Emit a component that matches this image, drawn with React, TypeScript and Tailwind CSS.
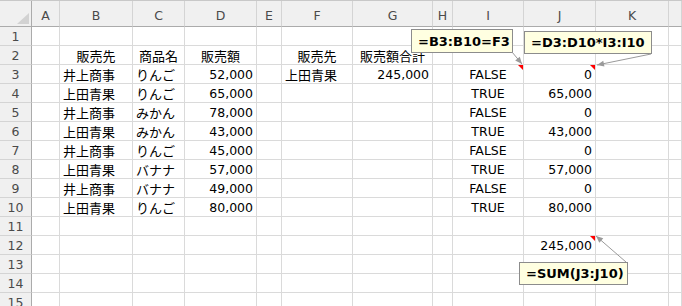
import React from "react";

type Align = "l" | "c" | "r";
type Cell = { t: string; a: Align; jp?: boolean };

const COLS = ["A", "B", "C", "D", "E", "F", "G", "H", "I", "J", "K", ""];
const ROW_COUNT = 15;

const jp = (t: string, a: Align = "l"): Cell => ({ t, a, jp: true });
const num = (t: string, a: Align = "r"): Cell => ({ t, a });

const DATA: [string, string, string, string, string][] = [
  ["井上商事", "りんご", "52,000", "FALSE", "0"],
  ["上田青果", "りんご", "65,000", "TRUE", "65,000"],
  ["井上商事", "みかん", "78,000", "FALSE", "0"],
  ["上田青果", "みかん", "43,000", "TRUE", "43,000"],
  ["井上商事", "りんご", "45,000", "FALSE", "0"],
  ["上田青果", "バナナ", "57,000", "TRUE", "57,000"],
  ["井上商事", "バナナ", "49,000", "FALSE", "0"],
  ["上田青果", "りんご", "80,000", "TRUE", "80,000"],
];

const sheet: Record<number, Record<string, Cell>> = {
  2: {
    B: jp("販売先", "c"),
    C: jp("商品名", "c"),
    D: jp("販売額", "c"),
    F: jp("販売先", "c"),
    G: jp("販売額合計", "c"),
  },
  12: { J: num("245,000") },
};

DATA.forEach(([client, item, amount, flag, value], i) => {
  const r = i + 3;
  sheet[r] = {
    B: jp(client),
    C: jp(item),
    D: num(amount),
    I: num(flag, "c"),
    J: num(value),
  };
});
sheet[3].F = jp("上田青果");
sheet[3].G = num("245,000");

const alignClass: Record<Align, string> = {
  l: "justify-start pl-[3px]",
  c: "justify-center",
  r: "justify-end pr-[3px]",
};

function GridCell({ cell }: { cell?: Cell }) {
  return (
    <div
      className={`flex h-[19px] items-center overflow-visible whitespace-nowrap border-r border-b border-[#dadada] bg-white text-black ${
        cell ? alignClass[cell.a] : ""
      }`}
    >
      {cell && (
        <span
          className={
            cell.jp
              ? "pt-[2px] text-[13px] leading-none"
              : "pt-[2px] text-[12.5px] leading-none"
          }
        >
          {cell.t}
        </span>
      )}
    </div>
  );
}

function arrowHead(x1: number, y1: number, x2: number, y2: number) {
  const dx = x2 - x1;
  const dy = y2 - y1;
  const len = Math.hypot(dx, dy);
  const ux = dx / len;
  const uy = dy / len;
  const L = 7;
  const W = 3;
  const bx = x2 - ux * L;
  const by = y2 - uy * L;
  return `${x2},${y2} ${bx - uy * W},${by + ux * W} ${bx + uy * W},${by - ux * W}`;
}

const ARROWS: [number, number, number, number][] = [
  [512, 52, 522, 64],
  [651, 54, 597, 65],
  [626, 262, 596, 236],
];

const MARKERS: [number, number][] = [
  [523, 65],
  [595, 65],
  [595, 236],
];

function Overlay() {
  return (
    <svg
      className="pointer-events-none absolute left-0 top-0"
      width={682}
      height={306}
      viewBox="0 0 682 306"
    >
      {MARKERS.map(([x, y], i) => (
        <polygon key={`m${i}`} points={`${x - 5},${y} ${x},${y} ${x},${y + 5}`} fill="#ff0000" />
      ))}
      {ARROWS.map(([x1, y1, x2, y2], i) => (
        <g key={`a${i}`}>
          <line x1={x1} y1={y1} x2={x2} y2={y2} stroke="#9a9a9a" strokeWidth={1} />
          <polygon points={arrowHead(x1, y1, x2, y2)} fill="#9a9a9a" />
        </g>
      ))}
    </svg>
  );
}

function Note({ text, className }: { text: string; className: string }) {
  return (
    <div
      className={`absolute flex items-center border border-[#8c8c8c] bg-[#ffffe1] pl-[6px] text-[13px] font-bold leading-none text-black ${className}`}
    >
      {text}
    </div>
  );
}

export default function App() {
  return (
    <div className="relative h-[306px] w-[682px] overflow-hidden bg-white font-['DejaVu_Sans','Noto_Sans_CJK_JP',sans-serif]">
      <div className="border-t border-[#c8c8c8]">
        <div className="grid grid-cols-[32px_28px_73px_52px_72px_25px_71px_80px_20px_71px_72px_73px_1fr]">
          {/* column headers */}
          <div className="flex h-[26px] items-end justify-end border-r border-b border-[#ababab] bg-[#f0f0f0] pb-[2px] pr-[2px]">
            <svg width="12" height="11" viewBox="0 0 12 11">
              <polygon points="12,0 12,11 0,11" fill="#d2d2d2" />
            </svg>
          </div>
          {COLS.map((c, i) => (
            <div
              key={`h${i}`}
              className="flex h-[26px] items-center justify-center border-r border-b border-r-[#d4d4d4] border-b-[#ababab] bg-[#f0f0f0] pt-[6px] text-[12.5px] leading-none text-[#4a4a4a]"
            >
              {c}
            </div>
          ))}

          {Array.from({ length: ROW_COUNT }, (_, ri) => {
            const r = ri + 1;
            const row = sheet[r] || {};
            return (
              <React.Fragment key={`r${r}`}>
                <div className="flex h-[19px] items-center justify-center border-r border-b border-r-[#ababab] border-b-[#d4d4d4] bg-[#f0f0f0] pt-[2px] text-[12.5px] leading-none text-[#4a4a4a]">
                  {r}
                </div>
                {COLS.map((c, ci) => (
                  <GridCell key={`c${r}-${ci}`} cell={c ? row[c] : undefined} />
                ))}
              </React.Fragment>
            );
          })}
        </div>
      </div>

      <Note text="=B3:B10=F3" className="left-[411px] top-[29px] h-[24px] w-[102px]" />
      <Note text="=D3:D10*I3:I10" className="left-[524px] top-[31px] h-[23px] w-[128px]" />
      <Note text="=SUM(J3:J10)" className="left-[519px] top-[262px] h-[23px] w-[109px]" />
      <Overlay />
    </div>
  );
}
